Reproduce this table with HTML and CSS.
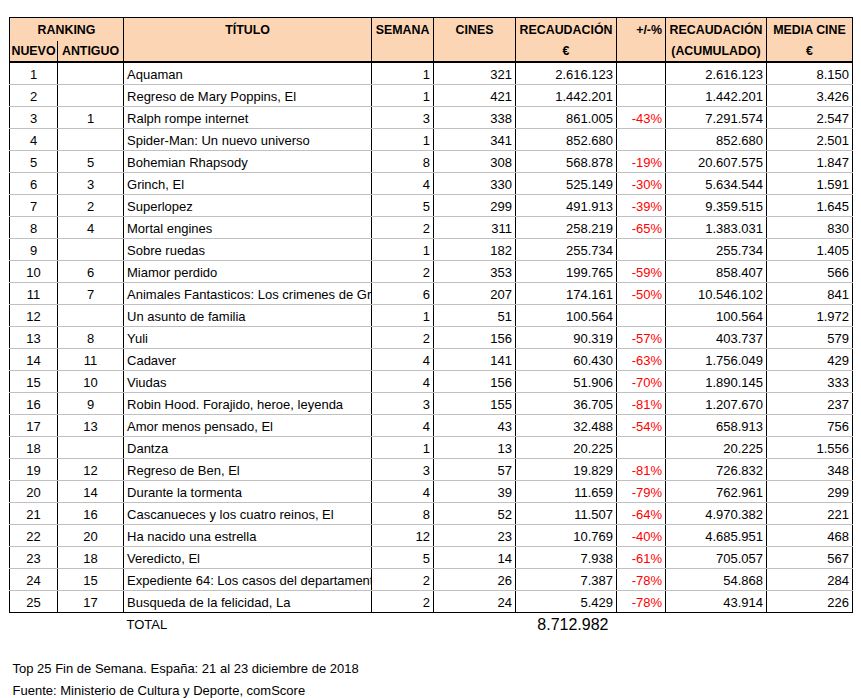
FILE: index.html
```html
<!DOCTYPE html>
<html lang="es">
<head>
<meta charset="utf-8">
<title>Top 25 Fin de Semana</title>
<link rel="stylesheet" href="styles.css">
</head>
<body>
<div class="sheet">
<table class="ranking">
<colgroup>
<col class="c-nuevo"><col class="c-antiguo"><col class="c-titulo"><col class="c-semana"><col class="c-cines"><col class="c-recaud"><col class="c-pct"><col class="c-acum"><col class="c-media">
</colgroup>
<thead>
<tr class="h1">
<th colspan="2" class="hc">RANKING</th>
<th rowspan="2" class="hc top">TÍTULO</th>
<th rowspan="2" class="hc top">SEMANA</th>
<th rowspan="2" class="hc top">CINES</th>
<th class="hc">RECAUDACIÓN</th>
<th rowspan="2" class="hr top">+/-%</th>
<th class="hc">RECAUDACIÓN</th>
<th class="hc">MEDIA CINE</th>
</tr>
<tr class="h2">
<th class="hc sub">NUEVO</th>
<th class="hc sub">ANTIGUO</th>
<th class="hc">€</th>
<th class="hc">(ACUMULADO)</th>
<th class="hc">€</th>
</tr>
</thead>
<tbody>
<tr><td class="ctr">1</td><td class="ctr"></td><td class="tit">Aquaman</td><td>1</td><td>321</td><td>2.616.123</td><td class="pct"></td><td>2.616.123</td><td>8.150</td></tr>
<tr><td class="ctr">2</td><td class="ctr"></td><td class="tit">Regreso de Mary Poppins, El</td><td>1</td><td>421</td><td>1.442.201</td><td class="pct"></td><td>1.442.201</td><td>3.426</td></tr>
<tr><td class="ctr">3</td><td class="ctr">1</td><td class="tit">Ralph rompe internet</td><td>3</td><td>338</td><td>861.005</td><td class="pct">-43%</td><td>7.291.574</td><td>2.547</td></tr>
<tr><td class="ctr">4</td><td class="ctr"></td><td class="tit">Spider-Man: Un nuevo universo</td><td>1</td><td>341</td><td>852.680</td><td class="pct"></td><td>852.680</td><td>2.501</td></tr>
<tr><td class="ctr">5</td><td class="ctr">5</td><td class="tit">Bohemian Rhapsody</td><td>8</td><td>308</td><td>568.878</td><td class="pct">-19%</td><td>20.607.575</td><td>1.847</td></tr>
<tr><td class="ctr">6</td><td class="ctr">3</td><td class="tit">Grinch, El</td><td>4</td><td>330</td><td>525.149</td><td class="pct">-30%</td><td>5.634.544</td><td>1.591</td></tr>
<tr><td class="ctr">7</td><td class="ctr">2</td><td class="tit">Superlopez</td><td>5</td><td>299</td><td>491.913</td><td class="pct">-39%</td><td>9.359.515</td><td>1.645</td></tr>
<tr><td class="ctr">8</td><td class="ctr">4</td><td class="tit">Mortal engines</td><td>2</td><td>311</td><td>258.219</td><td class="pct">-65%</td><td>1.383.031</td><td>830</td></tr>
<tr><td class="ctr">9</td><td class="ctr"></td><td class="tit">Sobre ruedas</td><td>1</td><td>182</td><td>255.734</td><td class="pct"></td><td>255.734</td><td>1.405</td></tr>
<tr><td class="ctr">10</td><td class="ctr">6</td><td class="tit">Miamor perdido</td><td>2</td><td>353</td><td>199.765</td><td class="pct">-59%</td><td>858.407</td><td>566</td></tr>
<tr><td class="ctr">11</td><td class="ctr">7</td><td class="tit">Animales Fantasticos: Los crimenes de Grindelwald</td><td>6</td><td>207</td><td>174.161</td><td class="pct">-50%</td><td>10.546.102</td><td>841</td></tr>
<tr><td class="ctr">12</td><td class="ctr"></td><td class="tit">Un asunto de familia</td><td>1</td><td>51</td><td>100.564</td><td class="pct"></td><td>100.564</td><td>1.972</td></tr>
<tr><td class="ctr">13</td><td class="ctr">8</td><td class="tit">Yuli</td><td>2</td><td>156</td><td>90.319</td><td class="pct">-57%</td><td>403.737</td><td>579</td></tr>
<tr><td class="ctr">14</td><td class="ctr">11</td><td class="tit">Cadaver</td><td>4</td><td>141</td><td>60.430</td><td class="pct">-63%</td><td>1.756.049</td><td>429</td></tr>
<tr><td class="ctr">15</td><td class="ctr">10</td><td class="tit">Viudas</td><td>4</td><td>156</td><td>51.906</td><td class="pct">-70%</td><td>1.890.145</td><td>333</td></tr>
<tr><td class="ctr">16</td><td class="ctr">9</td><td class="tit">Robin Hood. Forajido, heroe, leyenda</td><td>3</td><td>155</td><td>36.705</td><td class="pct">-81%</td><td>1.207.670</td><td>237</td></tr>
<tr><td class="ctr">17</td><td class="ctr">13</td><td class="tit">Amor menos pensado, El</td><td>4</td><td>43</td><td>32.488</td><td class="pct">-54%</td><td>658.913</td><td>756</td></tr>
<tr><td class="ctr">18</td><td class="ctr"></td><td class="tit">Dantza</td><td>1</td><td>13</td><td>20.225</td><td class="pct"></td><td>20.225</td><td>1.556</td></tr>
<tr><td class="ctr">19</td><td class="ctr">12</td><td class="tit">Regreso de Ben, El</td><td>3</td><td>57</td><td>19.829</td><td class="pct">-81%</td><td>726.832</td><td>348</td></tr>
<tr><td class="ctr">20</td><td class="ctr">14</td><td class="tit">Durante la tormenta</td><td>4</td><td>39</td><td>11.659</td><td class="pct">-79%</td><td>762.961</td><td>299</td></tr>
<tr><td class="ctr">21</td><td class="ctr">16</td><td class="tit">Cascanueces y los cuatro reinos, El</td><td>8</td><td>52</td><td>11.507</td><td class="pct">-64%</td><td>4.970.382</td><td>221</td></tr>
<tr><td class="ctr">22</td><td class="ctr">20</td><td class="tit">Ha nacido una estrella</td><td>12</td><td>23</td><td>10.769</td><td class="pct">-40%</td><td>4.685.951</td><td>468</td></tr>
<tr><td class="ctr">23</td><td class="ctr">18</td><td class="tit">Veredicto, El</td><td>5</td><td>14</td><td>7.938</td><td class="pct">-61%</td><td>705.057</td><td>567</td></tr>
<tr><td class="ctr">24</td><td class="ctr">15</td><td class="tit">Expediente 64: Los casos del departamento Q</td><td>2</td><td>26</td><td>7.387</td><td class="pct">-78%</td><td>54.868</td><td>284</td></tr>
<tr><td class="ctr">25</td><td class="ctr">17</td><td class="tit">Busqueda de la felicidad, La</td><td>2</td><td>24</td><td>5.429</td><td class="pct">-78%</td><td>43.914</td><td>226</td></tr>
</tbody>
<tfoot>
<tr class="total"><td></td><td></td><td class="tit">TOTAL</td><td></td><td></td><td class="big">8.712.982</td><td></td><td></td><td></td></tr>
<tr class="blank"><td colspan="9"></td></tr>
<tr class="note"><td colspan="9">Top 25 Fin de Semana. España: 21 al 23 diciembre de 2018</td></tr>
<tr class="note"><td colspan="9">Fuente: Ministerio de Cultura y Deporte, comScore</td></tr>
</tfoot>
</table>
</div>
</body>
</html>
```
FILE: styles.css
```css
html, body {
  margin: 0;
  padding: 0;
  background: #ffffff;
}
.sheet {
  padding: 17px 0 0 9px;
}
.ranking {
  border-collapse: collapse;
  table-layout: fixed;
  width: 844px;
  font-family: "Liberation Sans", Arial, sans-serif;
  font-size: 13px;
  color: #000;
}
.c-nuevo { width: 48px; }
.c-antiguo { width: 66px; }
.c-titulo { width: 248px; }
.c-semana { width: 62px; }
.c-cines { width: 82px; }
.c-recaud { width: 101px; }
.c-pct { width: 49px; }
.c-acum { width: 101px; }
.c-media { width: 86px; }

.ranking th {
  background: #fcd5b4;
  font-weight: bold;
  font-size: 12.4px;
  padding: 0 1px;
  white-space: nowrap;
  overflow: hidden;
  border-left: 1px solid #000;
  border-right: 1px solid #000;
  line-height: 15px;
}
.ranking thead tr.h1 th {
  border-top: 1px solid #000;
  height: 22px;
  vertical-align: middle;
  padding-top: 1px;
}
.ranking thead tr.h2 th {
  border-bottom: 2px solid #000;
  height: 20px;
  vertical-align: middle;
}
.ranking thead tr.h1 th.top {
  vertical-align: top;
  padding-top: 5px;
  border-bottom: 2px solid #000;
}
.ranking th.hc { text-align: center; }
.ranking thead th.hr { text-align: right; padding-right: 3px; }
.ranking thead tr.h1 th[colspan] { border-bottom: 0; }

.ranking tbody td {
  height: 19px;
  padding: 0 3px 2px;
  border-left: 1px solid #000;
  border-right: 1px solid #000;
  border-bottom: 1px solid #c0c0c0;
  text-align: right;
  white-space: nowrap;
  overflow: hidden;
  vertical-align: bottom;
  line-height: 15px;
}
.ranking tbody tr:last-child td {
  border-bottom: 1px solid #000;
}
.ranking td.ctr { text-align: center; }
.ranking td.tit { text-align: left; text-overflow: clip; }
.ranking td.pct { color: #ff0000; }

.ranking tfoot td {
  border: 0;
  padding: 0 3px;
  white-space: nowrap;
  height: 22px;
  vertical-align: middle;
  line-height: 15px;
}
.ranking tfoot tr.total td {
  padding-top: 1px;
  height: 21px;
}
.ranking tfoot td.big {
  text-align: right;
  font-size: 16px;
  padding-right: 8px;
}
.ranking tfoot tr.note td {
  text-align: left;
  overflow: visible;
  padding-top: 0;
  height: 22px;
}
```
